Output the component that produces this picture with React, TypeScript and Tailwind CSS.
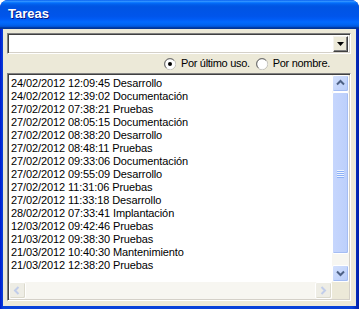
const rows = [
  "24/02/2012 12:09:45 Desarrollo",
  "24/02/2012 12:39:02 Documentación",
  "27/02/2012 07:38:21 Pruebas",
  "27/02/2012 08:05:15 Documentación",
  "27/02/2012 08:38:20 Desarrollo",
  "27/02/2012 08:48:11 Pruebas",
  "27/02/2012 09:33:06 Documentación",
  "27/02/2012 09:55:09 Desarrollo",
  "27/02/2012 11:31:06 Pruebas",
  "27/02/2012 11:33:18 Desarrollo",
  "28/02/2012 07:33:41 Implantación",
  "12/03/2012 09:42:46 Pruebas",
  "21/03/2012 09:38:30 Pruebas",
  "21/03/2012 10:40:30 Mantenimiento",
  "21/03/2012 12:38:20 Pruebas",
];

const Chevron = ({ dir, color }: { dir: "up" | "down" | "left" | "right"; color: string }) => {
  const d = {
    up: "M1 5.5 L4.5 2 L8 5.5",
    down: "M1 2.5 L4.5 6 L8 2.5",
    left: "M5.5 1 L2 4.5 L5.5 8",
    right: "M2.5 1 L6 4.5 L2.5 8",
  }[dir];
  return (
    <svg width="9" height="9" viewBox="0 0 9 9">
      <path d={d} fill="none" stroke={color} strokeWidth="2" />
    </svg>
  );
};

const ScrollButton = ({ dir }: { dir: "up" | "down" }) => (
  <div className="h-[17px] w-[17px] shrink-0 rounded-[2px] border border-white bg-[linear-gradient(135deg,#d3e0fd,#b9cdf9)] shadow-[inset_-1px_-1px_0_#a5bdf3] flex items-center justify-center">
    <Chevron dir={dir} color="#4d6185" />
  </div>
);

const DisabledButton = ({ dir }: { dir: "left" | "right" }) => (
  <div className="h-[17px] w-[17px] shrink-0 rounded-[2px] border border-white bg-[#eeede5] shadow-[inset_-1px_-1px_0_#dcdacd] flex items-center justify-center">
    <Chevron dir={dir} color="#c1cdea" />
  </div>
);

const Radio = ({ checked }: { checked?: boolean }) => (
  <svg width="12" height="12" viewBox="0 0 12 12" className="shrink-0">
    <circle cx="6" cy="6" r="5.5" fill="#ffffff" stroke="#a7a6a0" />
    <path d="M2.2 9.8 A5.2 5.2 0 0 1 9.8 2.2" fill="none" stroke="#6e6e6e" strokeWidth="1" />
    <path d="M10.5 3.5 A5.2 5.2 0 0 1 3.5 10.5" fill="none" stroke="#ffffff" strokeWidth="1" />
    {checked && <circle cx="6" cy="6" r="2" fill="#000000" />}
  </svg>
);

export default function App() {
  return (
    <div className="w-[359px] h-[309px] bg-white font-['Liberation_Sans',Arial,sans-serif]">
      <div className="w-[359px] h-[309px] flex flex-col rounded-t-[8px] overflow-hidden bg-[linear-gradient(90deg,#0019cf,#0842d9_3px,#0842d9_98%,#001ea8)]">
        {/* title bar */}
        <div className="h-[29px] shrink-0 flex items-center pl-[8px] pb-[1px] bg-[linear-gradient(180deg,#0058ee_0%,#3593ff_4%,#288eff_6%,#127dff_8%,#036ffc_10%,#0262ee_14%,#0057e5_20%,#0054e3_24%,#0055eb_56%,#005bf5_66%,#026afe_76%,#0062ef_86%,#0052d6_92%,#0040ab_94%,#003092_100%)]">
          <span className="text-white font-bold text-[13px] [text-shadow:1px_1px_0_#0a1883]">Tareas</span>
        </div>

        <div className="flex-1 mx-[3px] mb-[3px] bg-[#ece9d8] flex flex-col pl-[4px] pr-[5px] pt-[4px] pb-[5px] min-h-0">
          {/* combo */}
          <div className="h-[21px] shrink-0 bg-white border border-t-[#808080] border-l-[#808080] border-b-white border-r-white shadow-[inset_1px_1px_0_#404040,inset_-1px_-1px_0_#d4d0c8] flex items-center justify-end pr-[2px]">
            <div className="w-[15px] h-[16px] bg-[#ece9d8] border border-t-[#f4f3ee] border-l-[#f4f3ee] border-b-[#404040] border-r-[#404040] shadow-[inset_-1px_-1px_0_#808080] flex items-center justify-center">
              <svg width="7" height="4" viewBox="0 0 7 4">
                <path d="M0 0 H7 L3.5 4 Z" fill="#000000" />
              </svg>
            </div>
          </div>

          {/* radios */}
          <div className="h-[19px] shrink-0 flex items-center justify-end pr-[21px] text-[11px] tracking-[-0.3px] text-black">
            <Radio checked />
            <span className="ml-[5px]">Por último uso.</span>
            <span className="ml-[6px]">
              <Radio />
            </span>
            <span className="ml-[5px]">Por nombre.</span>
          </div>

          {/* list */}
          <div className="flex-1 min-h-0 flex flex-col border border-t-[#808080] border-l-[#808080] border-b-white border-r-white shadow-[inset_1px_1px_0_#404040,inset_-1px_-1px_0_#d4d0c8] p-[1px]">
            <div className="flex-1 min-h-0 flex">
              <div className="flex-1 bg-white pl-[2px] pt-[2px] overflow-hidden text-[11px] leading-[13px] tracking-[-0.1px] text-black whitespace-nowrap">
                {rows.map((r, i) => (
                  <div key={i}>{r}</div>
                ))}
              </div>
              <div className="w-[17px] flex flex-col bg-[#f7f6f1]">
                <ScrollButton dir="up" />
                <div className="h-[162px] rounded-[2px] border border-white bg-[linear-gradient(90deg,#c6d6fd,#bccffb)] shadow-[inset_-1px_-1px_0_#a5bdf3] flex flex-col items-center justify-center gap-[1px]">
                  {[0, 1, 2, 3].map((i) => (
                    <div key={i} className="w-[7px] h-[1px] bg-[#eef4fe] shadow-[0_1px_0_#8cb0f8]" />
                  ))}
                </div>
                <div className="flex-1" />
                <ScrollButton dir="down" />
              </div>
            </div>
            <div className="h-[17px] shrink-0 flex">
              <div className="flex-1 flex bg-[#f7f6f1]">
                <DisabledButton dir="left" />
                <div className="flex-1" />
                <DisabledButton dir="right" />
              </div>
              <div className="w-[17px] bg-[#ece9d8]" />
            </div>
          </div>
        </div>
      </div>
    </div>
  );
}
